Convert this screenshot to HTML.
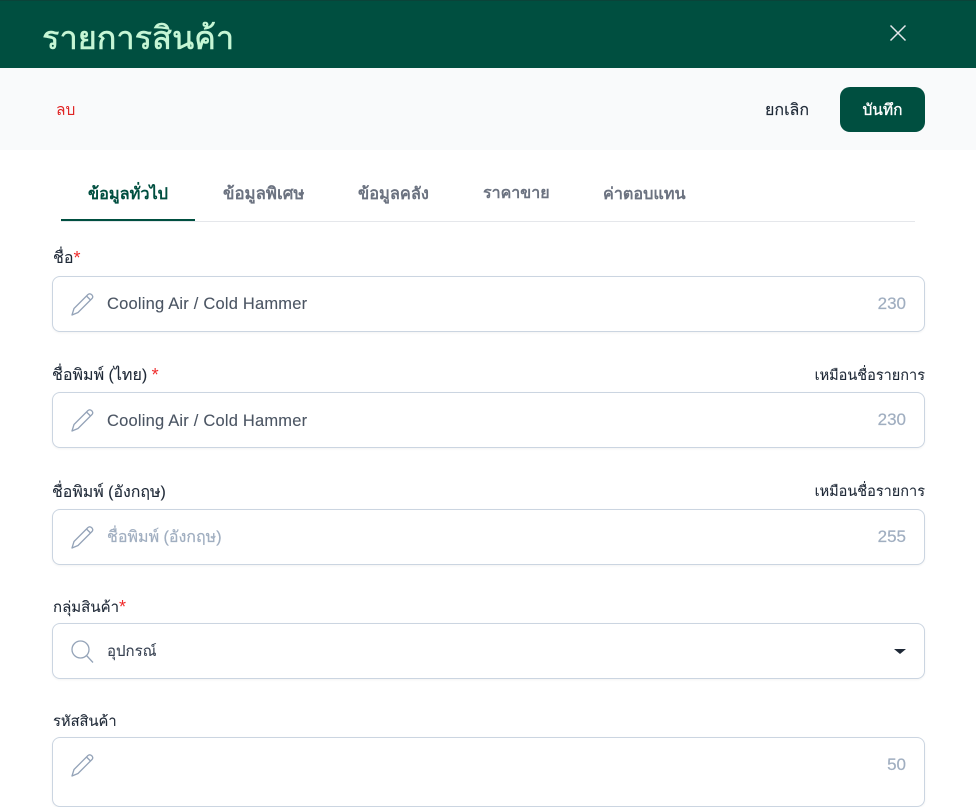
<!DOCTYPE html>
<html lang="th">
<head>
<meta charset="utf-8">
<title>รายการสินค้า</title>
<style>
html,body{margin:0;padding:0;background:#fff}
body{position:relative;width:976px;height:785px;overflow:hidden;font-family:"Liberation Sans","Noto Sans CJK SC",sans-serif;color:#1f2937}
.a{position:absolute;white-space:nowrap;line-height:20px}
.head{position:absolute;left:0;top:0;width:976px;height:68px;background:#004f40;border-top:1px solid #0b4339;box-sizing:border-box}
.bar{position:absolute;left:0;top:68px;width:976px;height:82px;background:#f9fafb}
.btn{position:absolute;left:840px;top:87px;width:85px;height:45px;background:#004f40;border-radius:10px;color:#fff;font-size:15.5px;text-align:center;line-height:47px;-webkit-text-stroke:.35px #fff}
.lb{font-size:16px;color:#1f2937;-webkit-text-stroke:.1px #1f2937}
.tab{font-size:16px;font-weight:700;color:#6b7280}
.req{color:#ef2b2b;font-size:18px;line-height:16px;-webkit-text-stroke:0;position:relative;top:1px}
.f{position:absolute;left:52px;width:873px;height:56px;box-sizing:border-box;border:1px solid #cbd5e1;border-radius:8px;background:#fff;box-shadow:0 1px 2px rgba(0,0,0,.05)}
.v{position:absolute;left:54px;top:17px;font-size:16.5px;letter-spacing:.2px;line-height:20px;color:#4b5563;white-space:nowrap;-webkit-text-stroke:.1px #4b5563}
.n{position:absolute;right:18px;top:17px;font-size:17px;line-height:20px;color:#a0aec0;-webkit-text-stroke:.2px #a0aec0}
.f svg{position:absolute;left:17px;top:15px}
</style>
</head>
<body>
<div class="head"></div>
<div class="a" style="left:42px;top:18px;font-size:32.5px;line-height:40px;color:#c6f6d5;-webkit-text-stroke:.6px #c6f6d5">รายการสินค้า</div>
<svg class="a" style="left:889px;top:24px" width="18" height="18" viewBox="0 0 18 18" fill="none" stroke="#e5e7eb" stroke-width="1.5"><path d="M1.5 1.5L16.5 16.5M16.5 1.5L1.5 16.5"/></svg>
<div class="bar"></div>
<div class="a" style="left:56px;top:101px;font-size:15.5px;color:#e02424">ลบ</div>
<div class="a" style="left:765px;top:101px;font-size:16px;color:#1f2937;-webkit-text-stroke:.15px #1f2937">ยกเลิก</div>
<div class="btn">บันทึก</div>

<div class="a tab" style="left:88px;top:184px;color:#004f40;font-size:16.3px">ข้อมูลทั่วไป</div>
<div class="a tab" style="left:223px;top:184px;font-size:16.8px">ข้อมูลพิเศษ</div>
<div class="a tab" style="left:358px;top:184px;font-size:16.4px">ข้อมูลคลัง</div>
<div class="a tab" style="left:483px;top:184px">ราคาขาย</div>
<div class="a tab" style="left:603px;top:184px;font-size:16.2px">ค่าตอบแทน</div>
<div style="position:absolute;left:61px;top:221px;width:854px;height:1px;background:#e5e7eb"></div>
<div style="position:absolute;left:61px;top:219px;width:134px;height:2px;background:#004f40"></div>

<div class="a lb" style="left:53px;top:249px">ชื่อ<span class="req">*</span></div>
<div class="f" style="top:276px">
<svg width="24" height="24" viewBox="0 0 24 24" fill="none" stroke="#94a3b8" stroke-width="1.3" stroke-linejoin="round"><path d="M2 23L4 16.5 18 2.5Q20 1 22 3 23.5 5 22 6.5L8 20.5Z"/><path d="M16.5 4L20.5 8"/></svg>
<div class="v">Cooling Air / Cold Hammer</div><div class="n">230</div></div>

<div class="a lb" style="left:52px;top:366px">ชื่อพิมพ์ (ไทย) <span class="req">*</span></div>
<div class="a lb" style="right:51px;top:366px;font-size:14.5px">เหมือนชื่อรายการ</div>
<div class="f" style="top:392px">
<svg width="24" height="24" viewBox="0 0 24 24" fill="none" stroke="#94a3b8" stroke-width="1.3" stroke-linejoin="round"><path d="M2 23L4 16.5 18 2.5Q20 1 22 3 23.5 5 22 6.5L8 20.5Z"/><path d="M16.5 4L20.5 8"/></svg>
<div class="v" style="top:18px">Cooling Air / Cold Hammer</div><div class="n">230</div></div>

<div class="a lb" style="left:52px;top:483px;font-size:15.9px">ชื่อพิมพ์ (อังกฤษ)</div>
<div class="a lb" style="right:51px;top:482px;font-size:14.5px">เหมือนชื่อรายการ</div>
<div class="f" style="top:509px">
<svg width="24" height="24" viewBox="0 0 24 24" fill="none" stroke="#94a3b8" stroke-width="1.3" stroke-linejoin="round"><path d="M2 23L4 16.5 18 2.5Q20 1 22 3 23.5 5 22 6.5L8 20.5Z"/><path d="M16.5 4L20.5 8"/></svg>
<div class="v" style="top:18px;color:#a0aec0;font-size:16px;letter-spacing:0;-webkit-text-stroke:.2px #a0aec0">ชื่อพิมพ์ (อังกฤษ)</div><div class="n">255</div></div>

<div class="a lb" style="left:53px;top:598px;font-size:15px">กลุ่มสินค้า<span class="req">*</span></div>
<div class="f" style="top:623px">
<svg width="24" height="24" viewBox="0 0 24 24" fill="none" stroke="#94a3b8" stroke-width="1.3"><circle cx="10.5" cy="10.5" r="8.5"/><path d="M16.5 16.5L23 23.5"/></svg>
<div class="v" style="top:18px;color:#374151;font-size:15px;letter-spacing:0">อุปกรณ์</div>
<div style="position:absolute;right:18px;top:25px;width:0;height:0;border-left:6px solid transparent;border-right:6px solid transparent;border-top:5px solid #1f2937"></div></div>

<div class="a lb" style="left:53px;top:712px;font-size:14.7px">รหัสสินค้า</div>
<div class="f" style="top:737px;height:70px">
<svg width="24" height="24" viewBox="0 0 24 24" fill="none" stroke="#94a3b8" stroke-width="1.3" stroke-linejoin="round"><path d="M2 23L4 16.5 18 2.5Q20 1 22 3 23.5 5 22 6.5L8 20.5Z"/><path d="M16.5 4L20.5 8"/></svg>
<div class="n">50</div></div>
</body>
</html>
